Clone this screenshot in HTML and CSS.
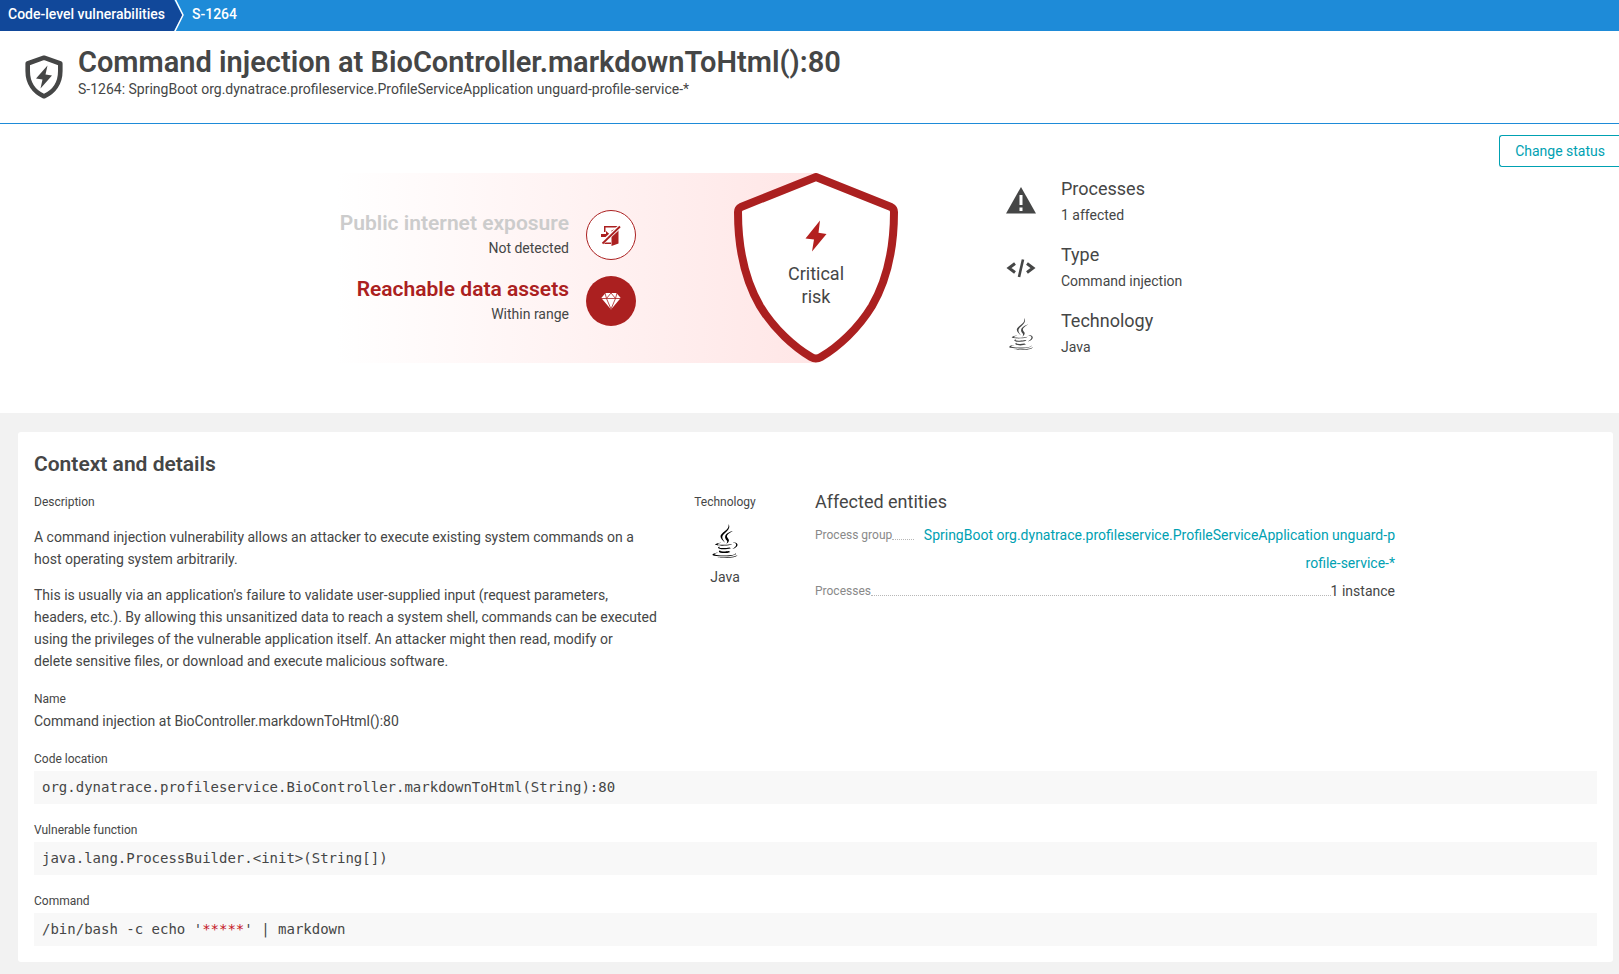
FILE: index.html
```html
<!DOCTYPE html>
<html lang="en">
<head>
<meta charset="utf-8">
<title>Command injection at BioController.markdownToHtml():80</title>
<link rel="stylesheet" href="styles.css">
</head>
<body>
<svg class="defs" aria-hidden="true">
  <symbol id="java" viewBox="0 0 24 24">
    <path d="M8.851 18.56s-.917.534.653.714c1.902.218 2.874.187 4.969-.211 0 0 .552.346 1.321.646-4.699 2.013-10.633-.118-6.943-1.149M8.276 15.933s-1.028.761.542.924c2.032.209 3.636.227 6.413-.308 0 0 .384.389.987.602-5.679 1.661-12.007.13-7.942-1.218M13.116 11.475c1.158 1.333-.304 2.533-.304 2.533s2.939-1.518 1.589-3.418c-1.261-1.772-2.228-2.652 3.007-5.688 0-.001-8.216 2.051-4.292 6.573M19.33 20.504s.679.559-.747.991c-2.712.822-11.288 1.069-13.669.033-.856-.373.75-.89 1.254-.998.527-.114.828-.093.828-.093-.953-.671-6.156 1.317-2.643 1.887 9.58 1.553 17.462-.7 14.977-1.82M9.292 13.21s-4.362 1.036-1.544 1.412c1.189.159 3.561.123 5.77-.062 1.806-.152 3.618-.477 3.618-.477s-.637.272-1.098.587c-4.429 1.165-12.986.623-10.522-.568 2.082-1.006 3.776-.892 3.776-.892M17.116 17.584c4.503-2.34 2.421-4.589.968-4.285-.355.074-.515.138-.515.138s.132-.207.385-.297c2.875-1.011 5.086 2.981-.928 4.562 0-.001.07-.062.09-.118M14.401 0s2.494 2.494-2.365 6.33c-3.896 3.077-.888 4.832-.001 6.836-2.274-2.053-3.943-3.858-2.824-5.539 1.644-2.469 6.197-3.665 5.19-7.627M9.734 23.924c4.322.277 10.959-.153 11.116-2.198 0 0-.302.775-3.572 1.391-3.688.694-8.239.613-10.937.168 0-.001.553.457 3.393.639"/>
  </symbol>
</svg>

<nav class="crumbs" aria-label="Breadcrumb">
  <a class="crumb crumb-root" href="#">Code-level vulnerabilities</a>
  <svg class="crumb-arrow" viewBox="0 0 10 31" aria-hidden="true">
    <path d="M0 0L8.500 15.500L0 31Z" fill="#11489a"/>
    <path d="M1 -1L9 15L.5 32" fill="none" stroke="#fff" stroke-width="1.500"/>
  </svg>
  <a class="crumb" href="#">S-1264</a>
</nav>

<header class="header">
  <svg class="header-icon" viewBox="0 0 38 44" aria-hidden="true">
    <path d="M19 2.700L35.300 8.500V16C35.300 28 29 37 19 41.300C9 37 2.700 28 2.700 16V8.500Z" fill="none" stroke="#454646" stroke-width="4.600" stroke-linejoin="round"/>
    <path d="M22.500 10.500L11 23.500L17.500 24.500L15.500 33.500L27 20.500L20.500 19.500Z" fill="#454646"/>
  </svg>
  <div>
    <h1 class="title">Command injection at BioController.markdownToHtml():80</h1>
    <p class="subtitle">S-1264: SpringBoot org.dynatrace.profileservice.ProfileServiceApplication unguard-profile-service-*</p>
  </div>
</header>

<main>
  <section class="summary">
    <div class="actions"><button class="status-button" type="button">Change status</button></div>
    <div class="overview">
      <div class="factors">
        <div class="factor">
          <div class="factor-text">
            <h2 class="factor-title factor-off">Public internet exposure</h2>
            <p class="factor-value">Not detected</p>
          </div>
          <svg class="badge" viewBox="0 0 50 50" aria-hidden="true">
            <circle cx="25" cy="25" r="24.500" fill="#fff" stroke="#ab2020"/>
            <g fill="#ab2020">
              <path d="M18 16H32V17.500H19.500V22H18ZM18 29H19.500V32.500H25V34H18Z"/>
              <path d="M25.500 20.500L32.500 17.500V33.500L25.500 36Z"/>
              <path d="M15 24H20V21L25 25.500L20 30V27H15Z"/>
            </g>
            <path d="M16 33L34 16.500" stroke="#fff" stroke-width="4"/>
            <path d="M16.500 33.500L34 16.500" stroke="#ab2020" stroke-width="1.800"/>
          </svg>
        </div>
        <div class="factor">
          <div class="factor-text">
            <h2 class="factor-title factor-on">Reachable data assets</h2>
            <p class="factor-value">Within range</p>
          </div>
          <svg class="badge" viewBox="0 0 50 50" aria-hidden="true">
            <circle cx="25" cy="25" r="25" fill="#ab2020"/>
            <path d="M19.500 17H30.500L34.700 22L25 33.500L15.300 22Z" fill="#fff"/>
            <path d="M15 22.500H35M20.500 22.500L25 33M29.500 22.500L25 33M19 17L20.500 22.500L25 17L29.500 22.500L31 17" fill="none" stroke="#ab2020" stroke-width=".8"/>
          </svg>
        </div>
      </div>

      <div class="risk">
        <svg class="risk-shield" viewBox="0 0 164 190" aria-hidden="true">
          <path d="M82 4L157 34Q160 35.500 160 39C160 78 153 107 138 133C124 156 104 174 87 184Q82 187 77 184C60 174 40 156 26 133C11 107 4 78 4 39Q4 35.500 7 34Z" fill="#fff" stroke="#ab2020" stroke-width="8" stroke-linejoin="round"/>
        </svg>
        <div class="risk-label">
          <svg class="risk-bolt" viewBox="0 0 22 32" aria-hidden="true"><path d="M15 .5L.5 18.500L9 19.500L7 31.500L21.500 14L13.500 12.700Z" fill="#b3201f"/></svg>
          <span>Critical<br>risk</span>
        </div>
      </div>

      <dl class="facts">
        <div class="fact">
          <svg class="fact-icon" viewBox="0 0 32 32" aria-hidden="true">
            <path d="M16 1L31 27.500H1Z" fill="#454646"/>
            <path d="M14.500 9H17.500V19H14.500ZM14.500 21.500H17.500V25H14.500Z" fill="#fff"/>
          </svg>
          <div><dt>Processes</dt><dd>1 affected</dd></div>
        </div>
        <div class="fact">
          <svg class="fact-icon" viewBox="0 0 32 32" aria-hidden="true">
            <path d="M10 11.500L4 16L10 20.500M22 11.500L28 16L22 20.500" fill="none" stroke="#454646" stroke-width="3"/>
            <path d="M18 7.500L14 25" stroke="#454646" stroke-width="2.600"/>
          </svg>
          <div><dt>Type</dt><dd>Command injection</dd></div>
        </div>
        <div class="fact">
          <svg class="fact-icon" fill="#454646" aria-hidden="true"><use href="#java"/></svg>
          <div><dt>Technology</dt><dd>Java</dd></div>
        </div>
      </dl>
    </div>
  </section>

  <section class="card">
    <h2 class="card-title">Context and details</h2>
    <div class="context">
      <div>
        <h3 class="label">Description</h3>
        <p class="para">A command injection vulnerability allows an attacker to execute existing system commands on a host operating system arbitrarily.</p>
        <p class="para">This is usually via an application's failure to validate user-supplied input (request parameters, headers, etc.). By allowing this unsanitized data to reach a system shell, commands can be executed using the privileges of the vulnerable application itself. An attacker might then read, modify or<br>delete sensitive files, or download and execute malicious software.</p>
      </div>
      <div class="tech">
        <h3 class="label">Technology</h3>
        <svg class="tech-icon" aria-hidden="true"><use href="#java"/></svg>
        <span>Java</span>
      </div>
      <div>
        <h3 class="entities-title">Affected entities</h3>
        <dl class="entities">
          <div class="entity"><dt>Process group</dt><dd><a href="#">SpringBoot org.dynatrace.profileservice.ProfileServiceApplication unguard-p<wbr>rofile-service-*</a></dd></div>
          <div class="entity"><dt>Processes</dt><dd>1 instance</dd></div>
        </dl>
      </div>
    </div>
    <div class="field">
      <h3 class="label">Name</h3>
      <p class="name">Command injection at BioController.markdownToHtml():80</p>
    </div>
    <div class="field">
      <h3 class="label">Code location</h3>
      <pre class="code">org.dynatrace.profileservice.BioController.markdownToHtml(String):80</pre>
    </div>
    <div class="field">
      <h3 class="label">Vulnerable function</h3>
      <pre class="code">java.lang.ProcessBuilder.&lt;init&gt;(String[])</pre>
    </div>
    <div class="field">
      <h3 class="label">Command</h3>
      <pre class="code">/bin/bash -c echo '<span class="masked">*****</span>' | markdown</pre>
    </div>
  </section>
</main>
</body>
</html>
```
FILE: styles.css
```css
* { box-sizing: border-box; }

body {
  margin: 0;
  background: #f2f2f2;
  color: #454646;
  font-family: Roboto, "Noto Sans", sans-serif;
  font-size: 14px;
  font-weight: 450;
  line-height: 22px;
}

h1, h2, h3, p, dl, dd, pre { margin: 0; }

a { color: #00a1b2; text-decoration: none; }

.defs { position: absolute; width: 0; height: 0; }

.crumbs {
  display: flex;
  height: 31px;
  background: #1e8bd8;
  line-height: 29px;
}

.crumb { color: #fff; padding: 0 9px 0 8px; font-weight: 500; }
.crumb-root { background: #11489a; }
.crumb-arrow { width: 10px; height: 31px; }

.header {
  display: flex;
  gap: 15px;
  padding: 13px 25px 24px;
  background: #fff;
  border-bottom: 1px solid #1e8bd8;
}

.header-icon { width: 38px; height: 44px; margin-top: 11px; }
.title { font-size: 29px; line-height: 37px; font-weight: 600; }
.subtitle { line-height: 17px; }

.summary { background: #fff; padding-bottom: 50px; }

.actions { display: flex; justify-content: flex-end; padding-top: 11px; }

.status-button {
  height: 32px;
  padding: 0 14px 0 15px;
  border: 1px solid #00a1b2;
  border-right: 0;
  border-radius: 3px 0 0 3px;
  background: #fff;
  color: #00a1b2;
  font: inherit;
}

.overview {
  display: grid;
  grid-template-columns: 1fr 164px 1fr;
  margin-top: 6px;
  padding-left: 13px;
}

.factors {
  justify-self: end;
  display: flex;
  flex-direction: column;
  gap: 16px;
  width: 480px;
  height: 190px;
  margin-right: -82px;
  padding: 37px 180px 0 0;
  background: linear-gradient(to right, #fff, #ffe6e6);
}

.factor { display: flex; justify-content: flex-end; gap: 17px; text-align: right; white-space: nowrap; }
.factor-title { font-size: 21px; line-height: 26px; font-weight: 600; }
.factor-off { color: #ccc; }
.factor-on { color: #ab2020; }
.factor-value { line-height: 24px; }
.badge { width: 50px; height: 50px; flex: none; }

.risk { display: grid; justify-items: center; }
.risk > * { grid-area: 1 / 1; }
.risk-shield { width: 164px; height: 190px; }
.risk-label {
  display: flex;
  flex-direction: column;
  align-items: center;
  gap: 10px;
  padding-top: 47px;
  z-index: 1;
  font-size: 18px;
  font-weight: 400;
  line-height: 23px;
  text-align: center;
}
.risk-bolt { width: 22px; height: 32px; }

.facts { display: flex; flex-direction: column; gap: 16px; padding: 2px 0 0 107px; }
.fact { display: flex; gap: 24px; height: 50px; }
.fact-icon { width: 32px; height: 32px; margin-top: 11px; }
.fact dt { font-size: 18px; line-height: 28px; font-weight: 400; }
.fact dd { line-height: 24px; }

.card {
  margin: 19px 6px 11px 18px;
  padding: 20px 16px 16px;
  border-radius: 3px;
  background: #fff;
}

.card-title { font-size: 21px; line-height: 24px; font-weight: 600; }

.context {
  display: grid;
  grid-template-columns: 630px 122px minmax(0, 609px);
  margin: 16px 0 17px;
}

.label { font-size: 12px; line-height: 20px; font-weight: 400; }
.para { margin-top: 14px; }

.tech { display: flex; flex-direction: column; align-items: center; }
.tech-icon { width: 34px; height: 34px; margin: 12px 0 8px; }

.entities-title { padding-left: 29px; font-size: 18px; line-height: 20px; font-weight: 400; }
.entities { margin-top: 9px; padding-left: 29px; }
.entity { display: flex; line-height: 28px; }
.entity dt { display: flex; flex: 1 0 auto; height: 28px; font-size: 12px; font-weight: 400; color: #898989; }
.entity dt::after { content: ""; flex: 1; height: 18px; border-bottom: 1px dotted #b7b7b7; }
.entity dd { max-width: 83%; text-align: right; }

.field + .field { margin-top: 16px; }
.name { line-height: 24px; }
.code {
  margin-top: 2px;
  padding: 5px 8px 6px;
  background: #f8f8f8;
  font-family: "DejaVu Sans Mono", monospace;
  font-size: 14px;
  font-weight: 400;
}
.masked { color: #c41425; }
```
